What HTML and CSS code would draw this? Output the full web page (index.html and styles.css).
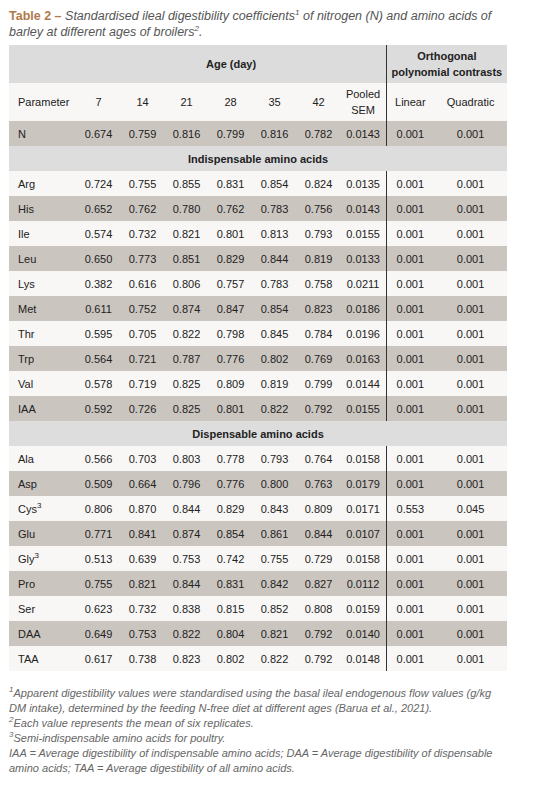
FILE: index.html
```html
<!DOCTYPE html>
<html>
<head>
<meta charset="utf-8">
<link rel="stylesheet" href="styles.css">
</head>
<body>
<div class="page">
  <p class="title"><span class="label">Table 2 –</span> <em>Standardised ileal digestibility coefficients<sup>1</sup> of nitrogen (N) and amino acids of barley at different ages of broilers<sup>2</sup>.</em></p>
  <table class="data">
    <colgroup>
      <col class="c-param"><col class="c-age"><col class="c-age"><col class="c-age"><col class="c-age"><col class="c-age"><col class="c-age"><col class="c-sem"><col class="c-lin"><col class="c-quad">
    </colgroup>
    <thead>
      <tr class="h1">
        <th></th>
        <th colspan="7" class="sep">Age (day)</th>
        <th colspan="2">Orthogonal<br>polynomial contrasts</th>
      </tr>
      <tr class="h2">
        <td class="param">Parameter</td><td>7</td><td>14</td><td>21</td><td>28</td><td>35</td><td>42</td><td class="sep">Pooled<br>SEM</td><td>Linear</td><td>Quadratic</td>
      </tr>
    </thead>
    <tbody>
      <tr class="g"><td class="param">N</td><td>0.674</td><td>0.759</td><td>0.816</td><td>0.799</td><td>0.816</td><td>0.782</td><td class="sep">0.0143</td><td>0.001</td><td>0.001</td></tr>
      <tr class="sec"><td colspan="10">Indispensable amino acids</td></tr>
      <tr class="w"><td class="param">Arg</td><td>0.724</td><td>0.755</td><td>0.855</td><td>0.831</td><td>0.854</td><td>0.824</td><td class="sep">0.0135</td><td>0.001</td><td>0.001</td></tr>
      <tr class="g"><td class="param">His</td><td>0.652</td><td>0.762</td><td>0.780</td><td>0.762</td><td>0.783</td><td>0.756</td><td class="sep">0.0143</td><td>0.001</td><td>0.001</td></tr>
      <tr class="w"><td class="param">Ile</td><td>0.574</td><td>0.732</td><td>0.821</td><td>0.801</td><td>0.813</td><td>0.793</td><td class="sep">0.0155</td><td>0.001</td><td>0.001</td></tr>
      <tr class="g"><td class="param">Leu</td><td>0.650</td><td>0.773</td><td>0.851</td><td>0.829</td><td>0.844</td><td>0.819</td><td class="sep">0.0133</td><td>0.001</td><td>0.001</td></tr>
      <tr class="w"><td class="param">Lys</td><td>0.382</td><td>0.616</td><td>0.806</td><td>0.757</td><td>0.783</td><td>0.758</td><td class="sep">0.0211</td><td>0.001</td><td>0.001</td></tr>
      <tr class="g"><td class="param">Met</td><td>0.611</td><td>0.752</td><td>0.874</td><td>0.847</td><td>0.854</td><td>0.823</td><td class="sep">0.0186</td><td>0.001</td><td>0.001</td></tr>
      <tr class="w"><td class="param">Thr</td><td>0.595</td><td>0.705</td><td>0.822</td><td>0.798</td><td>0.845</td><td>0.784</td><td class="sep">0.0196</td><td>0.001</td><td>0.001</td></tr>
      <tr class="g"><td class="param">Trp</td><td>0.564</td><td>0.721</td><td>0.787</td><td>0.776</td><td>0.802</td><td>0.769</td><td class="sep">0.0163</td><td>0.001</td><td>0.001</td></tr>
      <tr class="w"><td class="param">Val</td><td>0.578</td><td>0.719</td><td>0.825</td><td>0.809</td><td>0.819</td><td>0.799</td><td class="sep">0.0144</td><td>0.001</td><td>0.001</td></tr>
      <tr class="g"><td class="param">IAA</td><td>0.592</td><td>0.726</td><td>0.825</td><td>0.801</td><td>0.822</td><td>0.792</td><td class="sep">0.0155</td><td>0.001</td><td>0.001</td></tr>
      <tr class="sec"><td colspan="10">Dispensable amino acids</td></tr>
      <tr class="w"><td class="param">Ala</td><td>0.566</td><td>0.703</td><td>0.803</td><td>0.778</td><td>0.793</td><td>0.764</td><td class="sep">0.0158</td><td>0.001</td><td>0.001</td></tr>
      <tr class="g"><td class="param">Asp</td><td>0.509</td><td>0.664</td><td>0.796</td><td>0.776</td><td>0.800</td><td>0.763</td><td class="sep">0.0179</td><td>0.001</td><td>0.001</td></tr>
      <tr class="w"><td class="param">Cys<sup>3</sup></td><td>0.806</td><td>0.870</td><td>0.844</td><td>0.829</td><td>0.843</td><td>0.809</td><td class="sep">0.0171</td><td>0.553</td><td>0.045</td></tr>
      <tr class="g"><td class="param">Glu</td><td>0.771</td><td>0.841</td><td>0.874</td><td>0.854</td><td>0.861</td><td>0.844</td><td class="sep">0.0107</td><td>0.001</td><td>0.001</td></tr>
      <tr class="w"><td class="param">Gly<sup>3</sup></td><td>0.513</td><td>0.639</td><td>0.753</td><td>0.742</td><td>0.755</td><td>0.729</td><td class="sep">0.0158</td><td>0.001</td><td>0.001</td></tr>
      <tr class="g"><td class="param">Pro</td><td>0.755</td><td>0.821</td><td>0.844</td><td>0.831</td><td>0.842</td><td>0.827</td><td class="sep">0.0112</td><td>0.001</td><td>0.001</td></tr>
      <tr class="w"><td class="param">Ser</td><td>0.623</td><td>0.732</td><td>0.838</td><td>0.815</td><td>0.852</td><td>0.808</td><td class="sep">0.0159</td><td>0.001</td><td>0.001</td></tr>
      <tr class="g"><td class="param">DAA</td><td>0.649</td><td>0.753</td><td>0.822</td><td>0.804</td><td>0.821</td><td>0.792</td><td class="sep">0.0140</td><td>0.001</td><td>0.001</td></tr>
      <tr class="w"><td class="param">TAA</td><td>0.617</td><td>0.738</td><td>0.823</td><td>0.802</td><td>0.822</td><td>0.792</td><td class="sep">0.0148</td><td>0.001</td><td>0.001</td></tr>
    </tbody>
  </table>
  <div class="notes">
    <p><sup>1</sup>Apparent digestibility values were standardised using the basal ileal endogenous flow values (g/kg DM intake), determined by the feeding N-free diet at different ages (Barua et al., 2021).</p>
    <p><sup>2</sup>Each value represents the mean of six replicates.</p>
    <p><sup>3</sup>Semi-indispensable amino acids for poultry.</p>
    <p>IAA = Average digestibility of indispensable amino acids; DAA = Average digestibility of dispensable amino acids; TAA = Average digestibility of all amino acids.</p>
  </div>
</div>
</body>
</html>
```

FILE: styles.css
```css
html, body {
  margin: 0;
  padding: 0;
  background: #ffffff;
}

.page {
  width: 498px;
  padding: 9px 0 0 9px;
  font-family: "Liberation Sans", Arial, sans-serif;
  color: #222222;
}

.title {
  margin: 0 0 5px 0;
  font-size: 12.5px;
  line-height: 15.5px;
  color: #555555;
}

.title .label {
  font-weight: bold;
  color: #b07a4c;
}

.title sup {
  font-size: 8px;
  line-height: 0;
}

.data {
  width: 498px;
  border-collapse: collapse;
  table-layout: fixed;
  font-size: 11px;
}

.c-param { width: 67.5px; }
.c-age { width: 44px; }
.c-sem { width: 45.5px; }
.c-lin { width: 48px; }
.c-quad { width: 73px; }

.data td, .data th {
  padding: 0;
  text-align: center;
  vertical-align: middle;
  white-space: nowrap;
}

.data td.param {
  text-align: left;
  padding-left: 9px;
}

.data td.sep, .data th.sep {
  border-right: 1px solid #333333;
}

.data sup {
  font-size: 8px;
  line-height: 0;
}

.h1 th {
  height: 38px;
  background: #dcdcdc;
  font-weight: bold;
  line-height: 16px;
  color: #222222;
}

.h2 td {
  height: 38px;
  background: #f8f7f5;
  line-height: 16px;
}

tbody tr { height: 25px; }

tr.g td { background: #cbc5bf; }
tr.w td { background: #f8f7f5; }

tr.sec td {
  background: #dddddd;
  font-weight: bold;
}

.notes {
  margin-top: 15px;
  font-size: 11px;
  line-height: 15px;
  font-style: italic;
  color: #666666;
}

.notes p {
  margin: 0;
}

.notes sup {
  font-size: 8px;
  line-height: 0;
}
```
